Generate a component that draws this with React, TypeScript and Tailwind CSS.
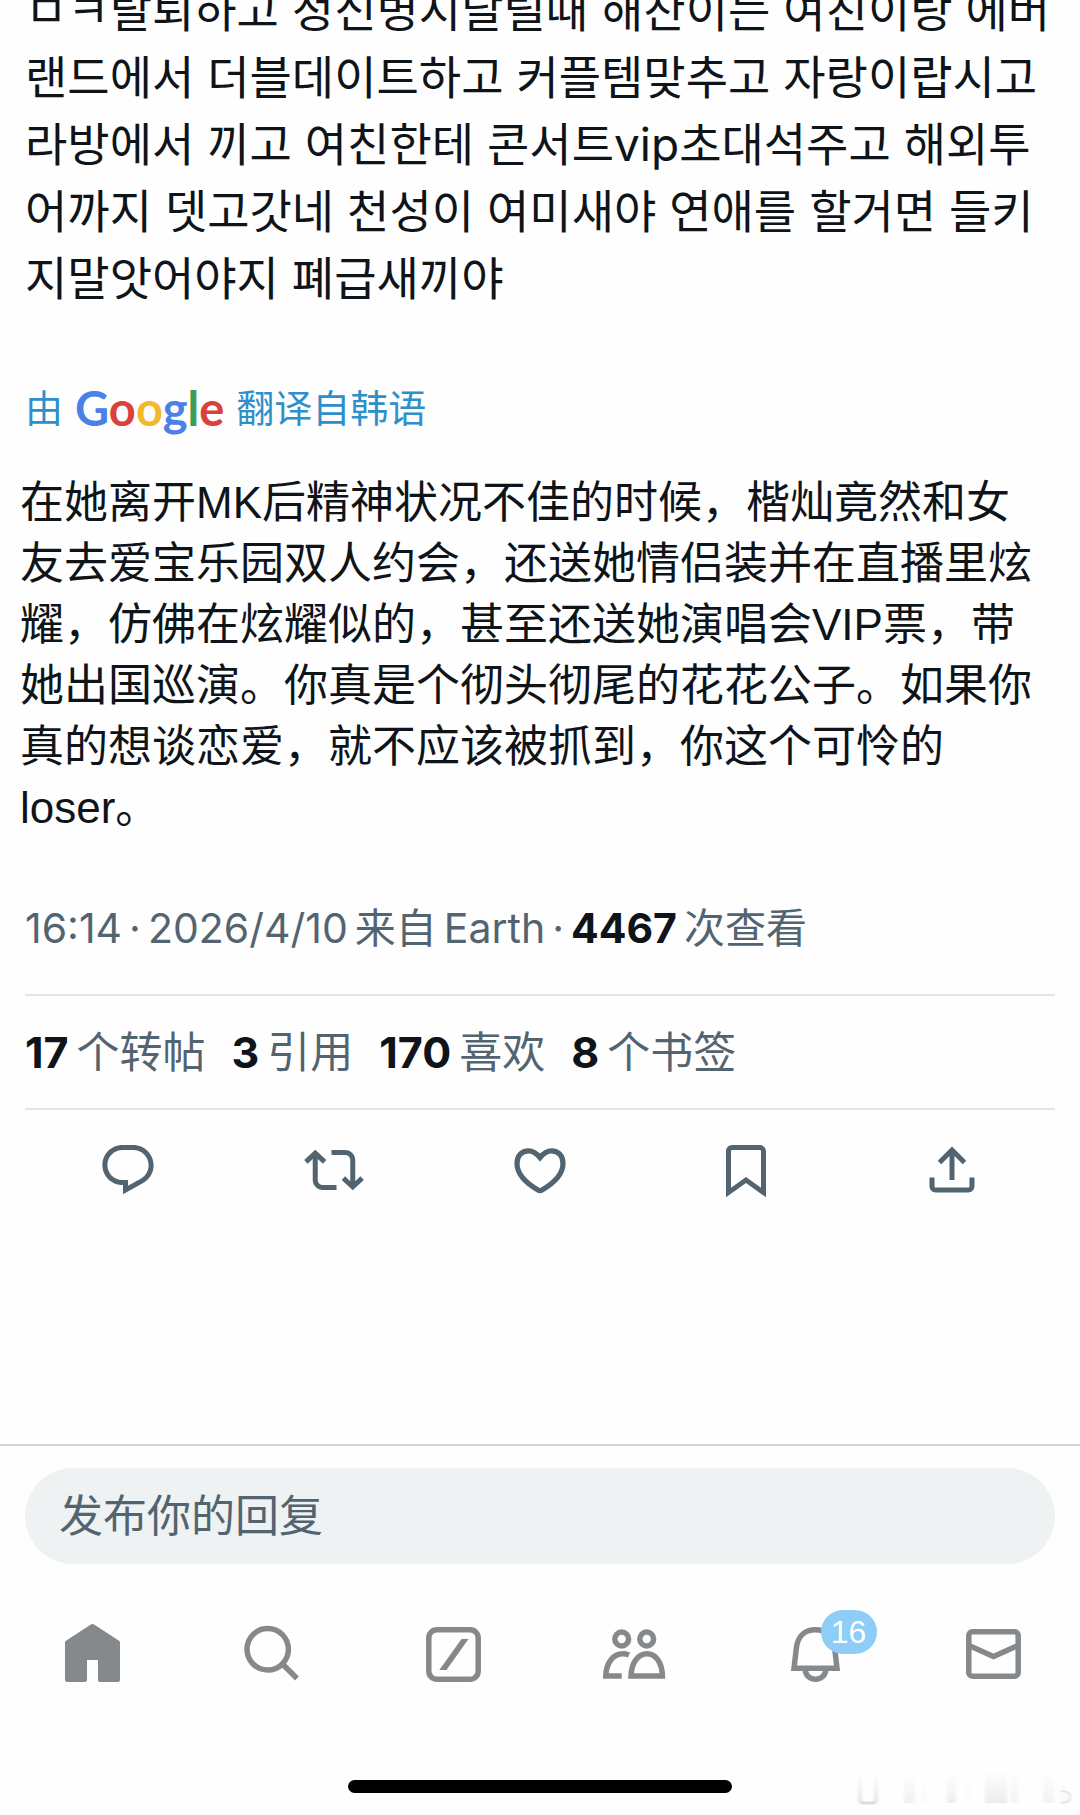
import type { ReactNode } from "react";

const koreanLines = [
  "ㅁㅋ탈퇴하고 정신병시달릴때 해찬이는 여친이랑 에버",
  "랜드에서 더블데이트하고 커플템맞추고 자랑이랍시고",
  "라방에서 끼고 여친한테 콘서트vip초대석주고 해외투",
  "어까지 뎃고갓네 천성이 여미새야 연애를 할거면 들키",
  "지말앗어야지 폐급새끼야",
];

const chineseLines = [
  "在她离开MK后精神状况不佳的时候，楷灿竟然和女",
  "友去爱宝乐园双人约会，还送她情侣装并在直播里炫",
  "耀，仿佛在炫耀似的，甚至还送她演唱会VIP票，带",
  "她出国巡演。你真是个彻头彻尾的花花公子。如果你",
  "真的想谈恋爱，就不应该被抓到，你这个可怜的",
  "loser。",
];

const stats = [
  { count: "17", label: "个转帖" },
  { count: "3", label: "引用" },
  { count: "170", label: "喜欢" },
  { count: "8", label: "个书签" },
];

const actions: { label: string; icon: ReactNode }[] = [
  {
    label: "回复",
    icon: (
      <path
        fill="currentColor"
        d="M1.751 10c0-4.42 3.584-8 8.005-8h4.366c4.49 0 8.129 3.64 8.129 8.13 0 2.96-1.607 5.68-4.196 7.11l-8.054 4.46v-3.69h-.067c-4.49.1-8.183-3.51-8.183-8.01zm8.005-6c-3.317 0-6.005 2.69-6.005 6 0 3.37 2.77 6.08 6.138 6.01l.351-.01h1.761v2.3l5.087-2.81c1.951-1.08 3.163-3.13 3.163-5.36 0-3.39-2.744-6.13-6.129-6.13H9.756z"
      />
    ),
  },
  {
    label: "转帖",
    icon: (
      <path
        fill="currentColor"
        d="M4.5 3.88l4.432 4.14-1.364 1.46L5.5 7.55V16c0 1.1.896 2 2 2H13v2H7.5c-2.209 0-4-1.79-4-4V7.55L1.432 9.48.068 8.02 4.5 3.88zM16.5 6H11V4h5.5c2.209 0 4 1.79 4 4v8.45l2.068-1.93 1.364 1.46-4.432 4.14-4.432-4.14 1.364-1.46 2.068 1.93V8c0-1.1-.896-2-2-2z"
      />
    ),
  },
  {
    label: "喜欢",
    icon: (
      <path
        fill="none"
        stroke="currentColor"
        strokeWidth="2.1"
        d="M12 7C10.4 5 8.8 4.3 7.4 4.3C4.6 4.3 2.8 6.4 2.8 9.4C2.8 14 6.4 17.2 11.2 20Q12 20.5 12.8 20C17.6 17.2 21.2 14 21.2 9.4C21.2 6.4 19.4 4.3 16.6 4.3C15.2 4.3 13.6 5 12 7Z"
      />
    ),
  },
  {
    label: "书签",
    icon: (
      <path
        fill="currentColor"
        d="M4 4.5C4 3.12 5.119 2 6.5 2h11C18.881 2 20 3.12 20 4.5v18.44l-8-5.71-8 5.71V4.5zM6.5 4c-.276 0-.5.22-.5.5v14.56l6-4.29 6 4.29V4.5c0-.28-.224-.5-.5-.5h-11z"
      />
    ),
  },
  {
    label: "分享",
    icon: (
      <path
        fill="currentColor"
        d="M12 2.59l5.7 5.7-1.41 1.42L13 6.41V16h-2V6.41l-3.3 3.3-1.41-1.42L12 2.59zM21 15l-.02 3.51c0 1.38-1.12 2.49-2.5 2.49H5.5C4.11 21 3 19.88 3 18.5V15h2v3.5c0 .28.22.5.5.5h12.98c.28 0 .5-.22.5-.5L19 15h2z"
      />
    ),
  },
];

const tabs: { label: string; icon: ReactNode; badge?: string }[] = [
  {
    label: "首页",
    icon: (
      <path
        fill="currentColor"
        stroke="none"
        d="M5 20.5Q5 19.5 6 18.8L30.5 2.7Q32.5 1.4 34.5 2.7L59 18.8Q60 19.5 60 20.5V58Q60 60 58 60H40Q38 60 38 58V38H27V58Q27 60 25 60H7Q5 60 5 58Z"
      />
    ),
  },
  {
    label: "搜索",
    icon: (
      <>
        <circle cx="27.7" cy="27.3" r="20.7" />
        <path d="M42.5 42L57 56.5" />
      </>
    ),
  },
  {
    label: "Grok",
    icon: (
      <>
        <rect x="7.8" y="7.8" width="49.4" height="49.4" rx="8" />
        <path fill="currentColor" stroke="none" d="M40.5 17H47.5L25.5 48H18.3Z" />
      </>
    ),
  },
  {
    label: "社群",
    icon: (
      <>
        <circle cx="20.7" cy="17" r="6.9" />
        <circle cx="45.7" cy="17" r="6.9" />
        <path d="M30 54C30.5 40 37.5 31.8 46 31.8S61 40 61.4 54Z" />
        <path d="M28 33Q25 31.8 22 31.8C12.5 31.8 5.2 40 4.8 54H20.7" />
      </>
    ),
  },
  {
    label: "通知",
    badge: "16",
    icon: (
      <>
        <path d="M12 46.3L14.5 25C16 14 23 7.8 33.5 7.8S51 14 52.5 25L55 46.3Z" />
        <path d="M23.2 47C23.2 53.5 28 57.3 33.5 57.3S43.8 53.5 43.8 47" />
      </>
    ),
  },
  {
    label: "私信",
    icon: (
      <>
        <rect x="6.8" y="9.8" width="49.4" height="44.4" rx="3.5" />
        <path d="M7 23.5L31.5 34.5L56 23.5" />
      </>
    ),
  },
];

const streaks = [
  { x: 124, w: 11, o: 0.4 },
  { x: 142, w: 4, o: 0.15 },
  { x: 167, w: 9, o: 0.45 },
  { x: 186, w: 4, o: 0.15 },
  { x: 205, w: 22, o: 0.55 },
  { x: 231, w: 7, o: 0.35 },
  { x: 263, w: 11, o: 0.35 },
  { x: 281, w: 4, o: 0.2 },
];

export default function App() {
  return (
    <div className="relative flex min-h-screen flex-col overflow-hidden bg-[#fefefe] font-['Inter','Noto_Sans_CJK_SC',sans-serif] text-[#0f1419]">
      <main className="flex-1">
        <p
          lang="ko"
          className="-mt-[23px] px-[25px] font-['Inter','Noto_Sans_CJK_KR',sans-serif] text-[46px] leading-[67px] whitespace-nowrap"
        >
          {koreanLines.map((line) => (
            <span key={line} className="block">
              {line}
            </span>
          ))}
        </p>

        <a
          href="#translation"
          className="mt-16 flex h-16 items-center px-[25px] text-[38px] leading-[64px] text-[#2f8fca]"
        >
          <span>由</span>
          <span className="ml-3 font-['Lato',sans-serif] text-[47px] font-bold">
            <span className="text-[#4a80e8]">G</span>
            <span className="text-[#d9413a]">o</span>
            <span className="text-[#f2b92c]">o</span>
            <span className="text-[#4a80e8]">g</span>
            <span className="text-[#3d9c55]">l</span>
            <span className="text-[#d9413a]">e</span>
          </span>
          <span className="ml-3">翻译自韩语</span>
        </a>

        <p
          id="translation"
          lang="zh-CN"
          className="mt-8 px-5 font-['Liberation_Sans','Noto_Sans_CJK_SC',sans-serif] text-[44px] leading-[61px] whitespace-nowrap"
        >
          {chineseLines.map((line) => (
            <span key={line} className="block">
              {line}
            </span>
          ))}
        </p>

        <div className="px-[25px]">
          <p className="mt-16 flex items-baseline gap-[7px] pb-10 text-[41px] leading-[52px] whitespace-nowrap text-[#536471]">
            <span>16:14</span>
            <span>·</span>
            <span>2026/4/10</span>
            <span>来自</span>
            <span>Earth</span>
            <span>·</span>
            <b className="font-bold text-[#0f1419]">4467</b>
            <span>次查看</span>
          </p>
          <ul className="flex gap-[26px] border-y-2 border-[#e1e5e8] py-7 text-[43px] leading-[56px] whitespace-nowrap text-[#536471]">
            {stats.map((s) => (
              <li key={s.label} className="flex items-baseline gap-2">
                <b className="font-bold text-[#0f1419]">{s.count}</b>
                <span>{s.label}</span>
              </li>
            ))}
          </ul>
          <div className="grid grid-cols-5 pt-[30px] text-[#536471]">
            {actions.map((a) => (
              <button key={a.label} type="button" aria-label={a.label} className="flex justify-center">
                <svg viewBox="0 0 24 24" className="size-[60px]" aria-hidden="true">
                  {a.icon}
                </svg>
              </button>
            ))}
          </div>
        </div>
      </main>

      <footer className="border-t-2 border-[#d3d7da]">
        <div className="px-[25px] pt-[22px]">
          <input
            type="text"
            aria-label="发布你的回复"
            placeholder="发布你的回复"
            className="block h-24 w-full rounded-full bg-[#eef2f3] px-[34px] text-[44px] text-[#0f1419] outline-none placeholder:text-[#536471]"
          />
        </div>
        <nav className="mt-[58px] flex justify-between pr-[54px] pl-[60px] text-[#85898c]">
          {tabs.map((t) => (
            <button key={t.label} type="button" aria-label={t.label} className="relative">
              <svg
                viewBox="0 0 64 64"
                className="size-16 overflow-visible"
                fill="none"
                stroke="currentColor"
                strokeWidth="5.5"
                aria-hidden="true"
              >
                {t.icon}
              </svg>
              {t.badge && (
                <span className="absolute -top-3 left-[39px] flex h-11 w-14 items-center justify-center rounded-full bg-[#8ecdf7] font-['Liberation_Sans',sans-serif] text-[32px] text-white">
                  {t.badge}
                </span>
              )}
            </button>
          ))}
        </nav>
        <div className="mx-auto mt-[94px] mb-[22px] h-[13px] w-96 rounded-full bg-black" />
      </footer>

      <svg
        viewBox="0 0 300 75"
        className="pointer-events-none absolute right-0 bottom-0 h-[75px] w-[300px]"
        aria-hidden="true"
      >
        <defs>
          <linearGradient id="streak" x1="0" y1="0" x2="0" y2="1">
            <stop offset="0" stopColor="#e4e4e4" stopOpacity="0" />
            <stop offset="1" stopColor="#dcdcdc" />
          </linearGradient>
          <filter id="soften">
            <feGaussianBlur stdDeviation="1.5 0.3" />
          </filter>
        </defs>
        <g filter="url(#soften)">
          <path d="M80 30V60Q80 63 84 63H92Q96 63 96 60V30" fill="none" stroke="url(#streak)" strokeWidth="3" />
          {streaks.map((s) => (
            <rect key={s.x} x={s.x} y="30" width={s.w} height="33" fill="url(#streak)" opacity={s.o} />
          ))}
          <path d="M281 51Q290 51 290 57T281 63" fill="none" stroke="#e2e2e2" strokeWidth="2" />
        </g>
      </svg>
    </div>
  );
}
